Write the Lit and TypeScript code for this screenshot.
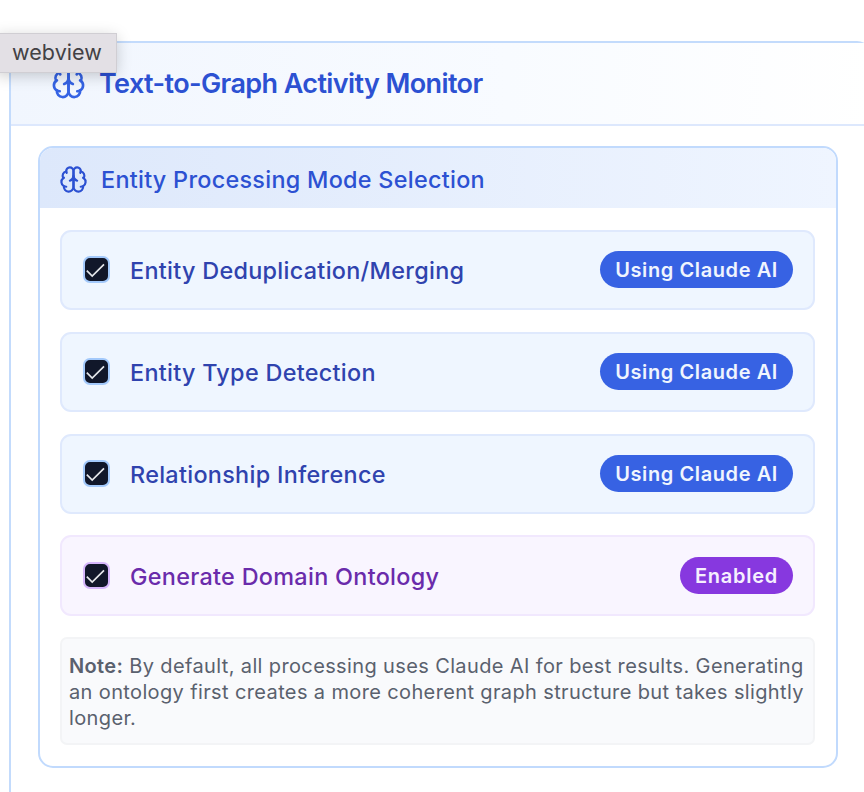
import { LitElement, html, css, svg } from "lit";
import { customElement, property } from "lit/decorators.js";
import { classMap } from "lit/directives/class-map.js";

const brainPaths = svg`
  <path d="M12 5a3 3 0 1 0-5.997.125 4 4 0 0 0-2.526 5.77 4 4 0 0 0 .556 6.588A4 4 0 1 0 12 18Z"/>
  <path d="M12 5a3 3 0 1 1 5.997.125 4 4 0 0 1 2.526 5.77 4 4 0 0 1-.556 6.588A4 4 0 1 1 12 18Z"/>
  <path d="M15 13a4.5 4.5 0 0 1-3-4 4.5 4.5 0 0 1-3 4"/>
  <path d="M17.599 6.5a3 3 0 0 0 .399-1.375"/>
  <path d="M6.003 5.125A3 3 0 0 0 6.401 6.5"/>
  <path d="M3.477 10.896a4 4 0 0 1 .585-.396"/>
  <path d="M19.938 10.5a4 4 0 0 1 .585.396"/>
  <path d="M6 18a4 4 0 0 1-1.967-.516"/>
  <path d="M19.967 17.484A4 4 0 0 1 18 18"/>`;

@customElement("brain-icon")
export class BrainIcon extends LitElement {
  static styles = css`
    :host { display: block; flex: none; }
    svg {
      display: block; width: 100%; height: 100%; fill: none;
      stroke: currentColor; stroke-width: 1.8; stroke-linecap: round; stroke-linejoin: round;
    }
  `;
  render() {
    return html`<svg viewBox="0 0 24 24">${brainPaths}</svg>`;
  }
}

@customElement("mode-row")
export class ModeRow extends LitElement {
  @property() label = "";
  @property() badge = "";
  @property() tone = "blue";

  static styles = css`
    :host { display: block; }
    .row {
      box-sizing: border-box; height: 80px; display: flex; align-items: center;
      padding: 0 20px 0 21px; border: 2px solid #dfe9fd; border-radius: 11px;
      background: #eff6ff; color: #2f43ae;
    }
    .row.purple { height: 81px; background: #f9f5ff; border-color: #f1e8fe; color: #6a2bab; }
    .box {
      box-sizing: border-box; width: 27px; height: 27px; border: 2px solid #a3c9fb;
      border-radius: 7px; background: #11172a; flex: none; margin-bottom: 1px;
    }
    .purple .box { border-color: #d5b6fb; margin-bottom: 0; }
    .box svg { display: block; width: 23px; height: 23px; fill: none; stroke: #e4e6ea; stroke-width: 1.7; }
    .label { margin-left: 20px; font-size: 23.4px; font-weight: 500; line-height: 32px; letter-spacing: 0.3px; white-space: nowrap; padding-top: 2px; }
    .badge {
      margin-left: auto; box-sizing: border-box; height: 37px; padding: 0 15px; border-radius: 19px;
      background: #3762e3; color: #f0f5fe; font-size: 20px; font-weight: 600; line-height: 38px;
      letter-spacing: 0.6px; white-space: nowrap; margin-bottom: 1px;
    }
    .purple .badge { background: #8738df; color: #f6effe; letter-spacing: 0.75px; margin-bottom: 0; }
  `;
  render() {
    return html`<div class=${classMap({ row: true, purple: this.tone === "purple" })}>
      <div class="box"><svg viewBox="0 0 23 23"><path d="M1.8 12.7 7.2 18 19 6.4"/></svg></div>
      <div class="label">${this.label}</div>
      <div class="badge">${this.badge}</div>
    </div>`;
  }
}

@customElement("app-root")
export class AppRoot extends LitElement {
  static styles = css`
    :host {
      display: block; position: relative; width: 100%; height: 792px; overflow: hidden;
      box-sizing: border-box; padding: 41px 0 0 9px; background: #fff;
      font-family: Inter, "Liberation Sans", sans-serif;
    }
    .monitor {
      box-sizing: border-box; width: 862px; height: 900px;
      border: 2px solid #c3dbfc; border-radius: 14px;
    }
    .head {
      box-sizing: border-box; height: 83px; display: flex; align-items: center;
      padding: 0 0 1px 40px; border-bottom: 2px solid #dde8fd;
      background: linear-gradient(90deg, #f1f6fe, #f8fbff 58%, #fff); color: #2c51d2;
    }
    .head brain-icon { width: 35px; height: 35px; color: #3563e4; margin-bottom: 1px; }
    .title { margin-left: 13px; font-size: 27px; font-weight: 600; line-height: 36px; letter-spacing: -0.61px; white-space: nowrap; padding-top: 1px; }
    .panel {
      box-sizing: border-box; width: 800px; height: 622px; margin: 20px 0 0 27px;
      border: 2px solid #c1dafd; border-radius: 15px; overflow: hidden;
    }
    .panel-head {
      height: 60px; display: flex; align-items: center; padding: 2px 0 0 19px; box-sizing: border-box;
      background: linear-gradient(90deg, #dde8fb, #eff5ff); color: #2c51d2;
    }
    .panel-head brain-icon { width: 29px; height: 29px; }
    .subtitle { margin-left: 13px; font-size: 23.4px; font-weight: 500; line-height: 32px; letter-spacing: 0.28px; white-space: nowrap; padding-top: 1px; }
    .rows { display: flex; flex-direction: column; gap: 22px; padding: 22px 21px 0 20px; }
    .rows mode-row:last-of-type { margin-top: -1px; }
    .note {
      box-sizing: border-box; height: 108px; margin-top: -1px; padding: 14px 0 0 7px;
      border: 2px solid #f3f4f6; border-radius: 7px; background: #f9fafc;
      font-size: 20px; line-height: 26px; letter-spacing: 0.37px; color: #5a616e; white-space: nowrap;
    }
    .note b { font-weight: 600; }
    .tag {
      position: absolute; left: -4px; top: 34px; box-sizing: border-box; width: 120px; height: 38px;
      padding-left: 16px; background: #e3e0e5; color: #424144; font-size: 21.5px; line-height: 37px;
      letter-spacing: 0.05px; box-shadow: 0 0 0 1px #d0ced3, 0 3px 16px rgba(0, 0, 0, 0.22);
    }
  `;
  private rows = [
    ["Entity Deduplication/Merging", "Using Claude AI", "blue"],
    ["Entity Type Detection", "Using Claude AI", "blue"],
    ["Relationship Inference", "Using Claude AI", "blue"],
    ["Generate Domain Ontology", "Enabled", "purple"],
  ];
  render() {
    return html`
      <section class="monitor">
        <header class="head"><brain-icon></brain-icon><div class="title">Text-to-Graph Activity Monitor</div></header>
        <div class="panel">
          <div class="panel-head"><brain-icon></brain-icon><div class="subtitle">Entity Processing Mode Selection</div></div>
          <div class="rows">
            ${this.rows.map(([l, b, t]) => html`<mode-row .label=${l} .badge=${b} .tone=${t}></mode-row>`)}
            <div class="note"><b>Note:</b> By default, all processing uses Claude AI for best results. Generating<br>an ontology first creates a more coherent graph structure but takes slightly<br>longer.</div>
          </div>
        </div>
      </section>
      <div class="tag">webview</div>`;
  }
}
